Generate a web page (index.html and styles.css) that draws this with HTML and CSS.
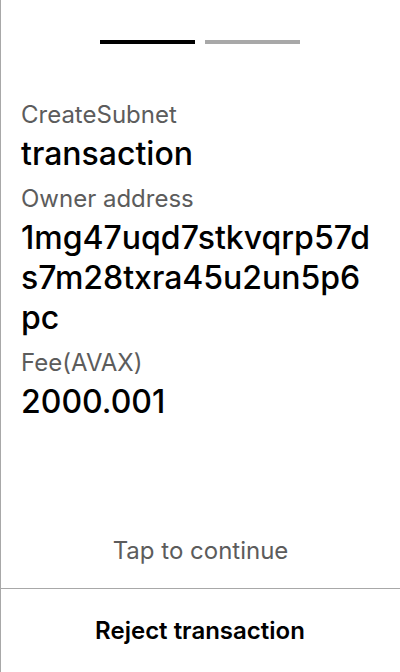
FILE: index.html
```html
<!DOCTYPE html>
<html>
<head>
<meta charset="utf-8">
<link rel="stylesheet" href="styles.css">
</head>
<body>
<div class="screen">
  <div class="progress">
    <span class="step active"></span>
    <span class="step"></span>
  </div>
  <div class="content">
    <div class="field">
      <div class="label">CreateSubnet</div>
      <div class="value">transaction</div>
    </div>
    <div class="field">
      <div class="label">Owner address</div>
      <div class="value">1mg47uqd7stkvqrp57ds7m28txra45u2un5p6pc</div>
    </div>
    <div class="field">
      <div class="label">Fee(AVAX)</div>
      <div class="value">2000.001</div>
    </div>
  </div>
  <div class="tap">Tap to continue</div>
  <div class="reject">Reject transaction</div>
</div>
</body>
</html>
```
FILE: styles.css
```css
html, body {
  margin: 0;
  padding: 0;
  background: #fff;
}
body {
  font-family: Inter, "Liberation Sans", sans-serif;
  color: #000;
}
.screen {
  width: 400px;
  height: 672px;
  box-sizing: border-box;
  border-left: 1px solid #a8a8a8;
  display: flex;
  flex-direction: column;
}
.progress {
  display: flex;
  justify-content: center;
  gap: 10px;
  padding-top: 40px;
  margin-left: -1px;
}
.step {
  width: 95px;
  height: 4px;
  background: #a8a8a8;
}
.step.active {
  background: #000;
}
.content {
  padding: 56px 22px 0 20px;
  display: flex;
  flex-direction: column;
  gap: 10px;
  flex: 1;
}
.field {
  display: flex;
  flex-direction: column;
  gap: 4px;
}
.label {
  font-size: 24px;
  line-height: 30px;
  color: #5c5c5c;
}
.value {
  font-size: 32px;
  line-height: 40px;
  font-weight: 500;
  word-break: break-all;
}
.tap {
  text-align: center;
  font-size: 24px;
  line-height: 30px;
  color: #5c5c5c;
  padding-bottom: 22px;
}
.reject {
  border-top: 1px solid #a8a8a8;
  height: 83px;
  display: flex;
  align-items: center;
  justify-content: center;
  font-size: 24px;
  font-weight: 600;
  margin-left: -1px;
}
```
